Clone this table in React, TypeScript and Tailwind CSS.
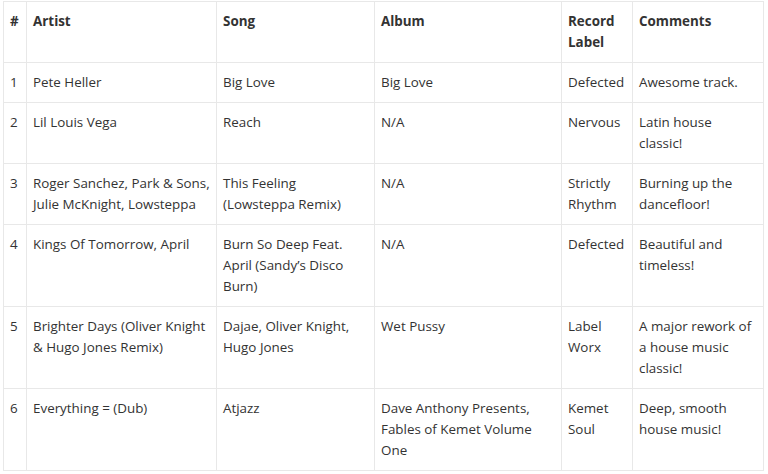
import React from 'react';

type Row = {
  artist: string;
  song: string;
  album: string;
  label: string;
  comments: string;
};

const rows: Row[] = [
  { artist: 'Pete Heller', song: 'Big Love', album: 'Big Love', label: 'Defected', comments: 'Awesome track.' },
  { artist: 'Lil Louis Vega', song: 'Reach', album: 'N/A', label: 'Nervous', comments: 'Latin house classic!' },
  {
    artist: 'Roger Sanchez, Park & Sons, Julie McKnight, Lowsteppa',
    song: 'This Feeling (Lowsteppa Remix)',
    album: 'N/A',
    label: 'Strictly Rhythm',
    comments: 'Burning up the dancefloor!',
  },
  {
    artist: 'Kings Of Tomorrow, April',
    song: 'Burn So Deep Feat. April (Sandy’s Disco Burn)',
    album: 'N/A',
    label: 'Defected',
    comments: 'Beautiful and timeless!',
  },
  {
    artist: 'Brighter Days (Oliver Knight & Hugo Jones Remix)',
    song: 'Dajae, Oliver Knight, Hugo Jones',
    album: 'Wet Pussy',
    label: 'Label Worx',
    comments: 'A major rework of a house music classic!',
  },
  {
    artist: 'Everything = (Dub)',
    song: 'Atjazz',
    album: 'Dave Anthony Presents, Fables of Kemet Volume One',
    label: 'Kemet Soul',
    comments: 'Deep, smooth house music!',
  },
];

const cell = 'border border-[#e8e8e8] px-[6px] py-[9px] align-top';

export default function App() {
  return (
    <div className="min-h-[474px] bg-white pt-[1px] pl-[3px] font-['Open_Sans',sans-serif] text-[13.4px] leading-[21px] text-[#333]">
      <table className="w-[760px] table-fixed border-collapse">
        <colgroup>
          <col className="w-[23px]" />
          <col className="w-[190px]" />
          <col className="w-[158px]" />
          <col className="w-[187px]" />
          <col className="w-[71px]" />
          <col className="w-[131px]" />
        </colgroup>
        <thead>
          <tr className="text-left font-bold">
            <th className={cell}>#</th>
            <th className={cell}>Artist</th>
            <th className={cell}>Song</th>
            <th className={cell}>Album</th>
            <th className={cell}>Record Label</th>
            <th className={cell}>Comments</th>
          </tr>
        </thead>
        <tbody>
          {rows.map((r, i) => (
            <tr key={i}>
              <td className={cell}>{i + 1}</td>
              <td className={cell}>{r.artist}</td>
              <td className={cell}>{r.song}</td>
              <td className={cell}>{r.album}</td>
              <td className={cell}>{r.label}</td>
              <td className={cell}>{r.comments}</td>
            </tr>
          ))}
        </tbody>
      </table>
    </div>
  );
}
